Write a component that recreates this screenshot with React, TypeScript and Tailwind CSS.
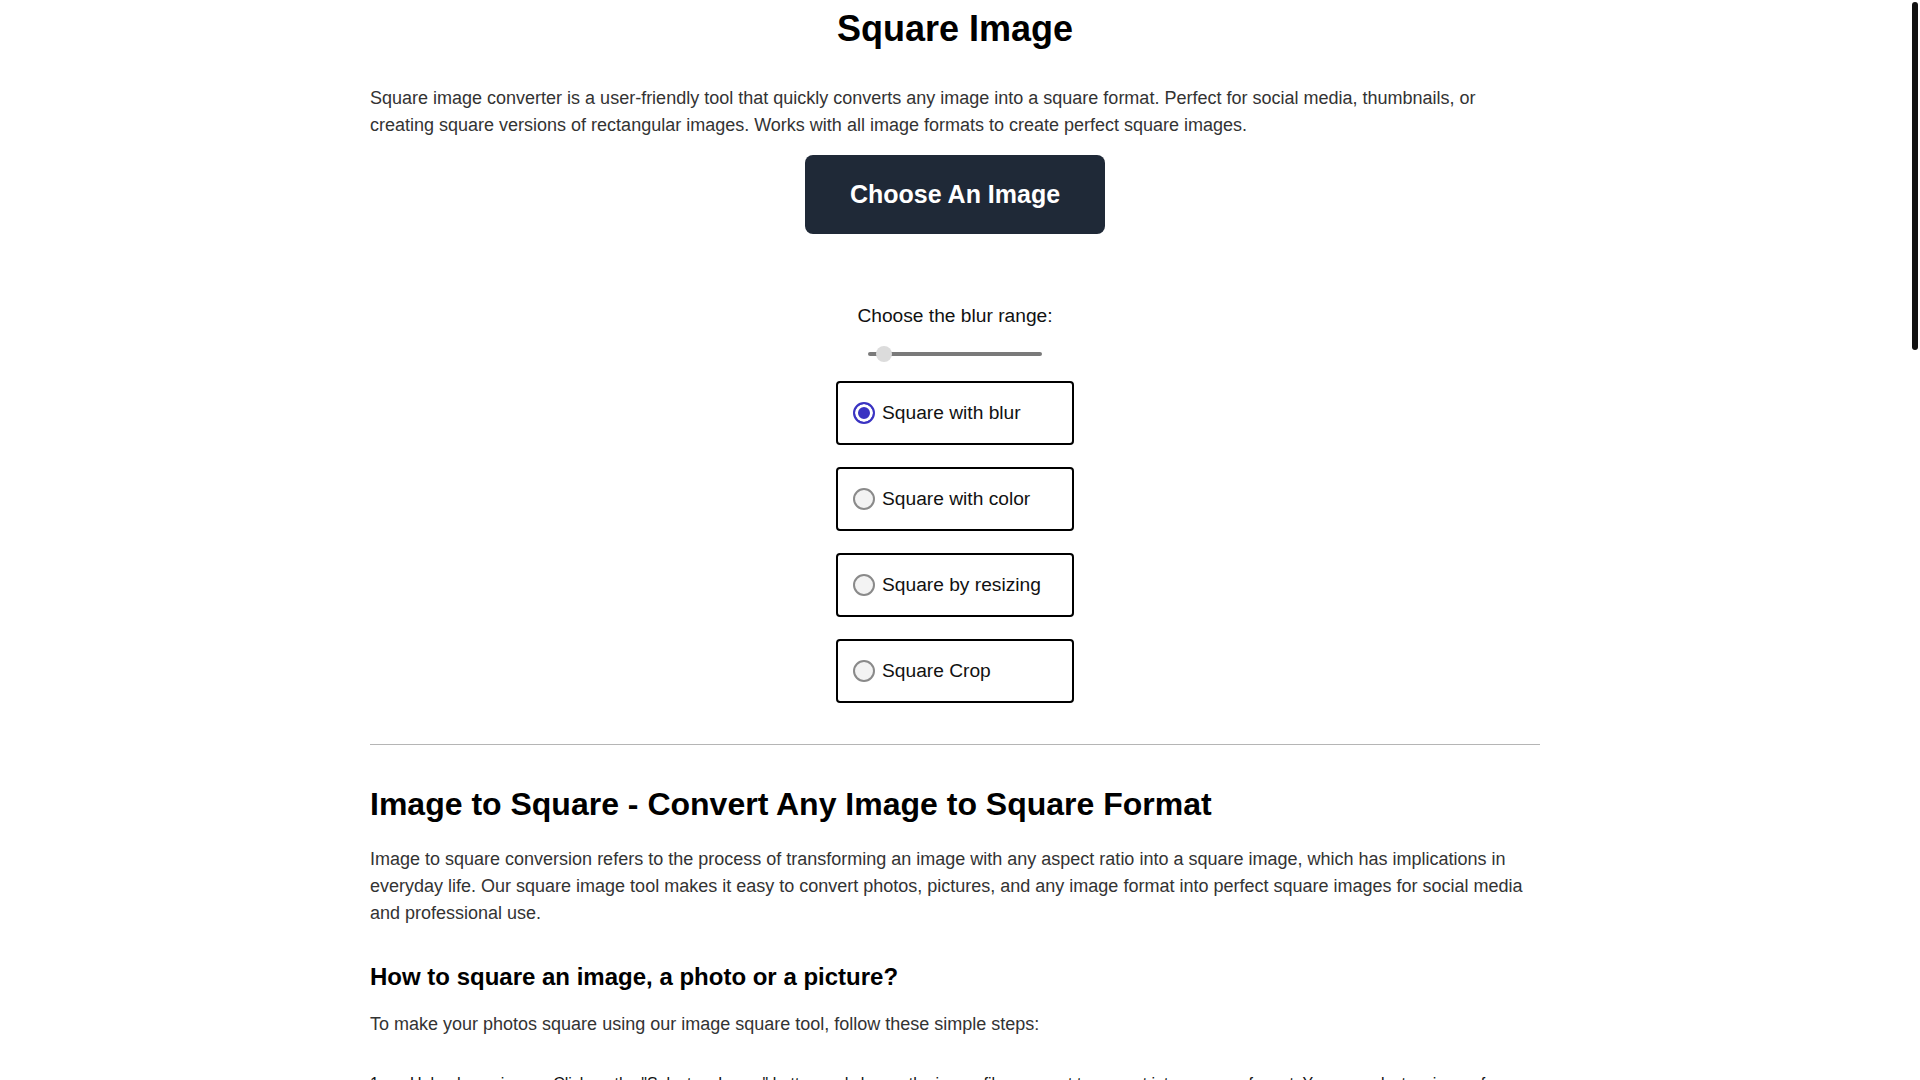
import { useState } from 'react'

const modes = [
  { id: 'blur', label: 'Square with blur' },
  { id: 'color', label: 'Square with color' },
  { id: 'resize', label: 'Square by resizing' },
  { id: 'crop', label: 'Square Crop' },
]

const steps = [
  {
    title: 'Upload your image:',
    text: 'Click on the "Select an Image" button and choose the image file you want to convert into a square format. You can select an image from your computer, phone or tablet, whatever the format (JPG, PNG, WEBP, GIF).',
  },
  {
    title: 'Choose the squaring mode:',
    text: 'Pick "Square with blur" to fill the empty space with a blurred copy of your picture, "Square with color" to use a solid background, "Square by resizing" to stretch the image, or "Square Crop" to cut it.',
  },
  {
    title: 'Adjust the settings:',
    text: 'Use the blur range slider to set how strong the background blur should be, or pick the background color that suits your photo best.',
  },
  {
    title: 'Download your square image:',
    text: 'Once you are happy with the preview, click the download button to save your new square image. Your files never leave your device.',
  },
]

const faqs = [
  {
    q: 'Why convert an image to a square?',
    a: 'Many platforms such as Instagram, Facebook, LinkedIn or online marketplaces display pictures in a square frame. Converting your image beforehand keeps the whole subject visible instead of letting the platform crop it automatically.',
  },
  {
    q: 'Will my image lose quality?',
    a: 'No. The square image is generated at the resolution of the longest side of your original picture, so no detail is lost during the conversion.',
  },
  {
    q: 'Which image formats are supported?',
    a: 'The square image tool works with all common formats including JPG, JPEG, PNG, WEBP, GIF and BMP. The result can be downloaded as a JPG or PNG file.',
  },
  {
    q: 'Is the square image converter free?',
    a: 'Yes, the tool is completely free, requires no sign up and adds no watermark to your pictures.',
  },
  {
    q: 'Are my images uploaded to a server?',
    a: 'No. All the processing happens directly in your browser, which keeps your photos private and makes the conversion instant.',
  },
]

export default function App() {
  const [mode, setMode] = useState('blur')
  const [blur, setBlur] = useState(1)

  return (
    <div className="h-screen overflow-y-auto bg-white pr-[10px] font-['Liberation_Sans',Arial,sans-serif]">
      <div className="fixed top-[2px] right-[2px] h-[348px] w-[6px] rounded-full bg-[#111]" />

      <main className="mx-auto max-w-[1200px] px-[15px] pb-16">
        <h1 className="pt-[9px] text-center text-4xl leading-10 font-bold text-black">Square Image</h1>

        <p className="mt-[36px] text-[18px] leading-[27px] text-[#333]">
          Square image converter is a user-friendly tool that quickly converts any image into a square format. Perfect for
          social media, thumbnails, or creating square versions of rectangular images. Works with all image formats to
          create perfect square images.
        </p>

        <div className="mt-4 flex justify-center">
          <button
            type="button"
            className="rounded-lg bg-[#1f2937] px-[45px] py-6 text-[25px] leading-[31px] font-bold text-white"
          >
            Choose An Image
          </button>
        </div>

        {/* ── Options ───────────────────────────────────────────── */}
        <div className="mt-[68px] flex flex-col items-center">
          <label htmlFor="blur" className="text-[19.2px] leading-[27px] text-[#111]">
            Choose the blur range:
          </label>
          <div className="mt-[17px] flex h-4 items-center">
            <input
              id="blur"
              type="range"
              min={0}
              max={20}
              value={blur}
              onChange={e => setBlur(Number(e.target.value))}
              className="h-1 w-[174px] cursor-pointer appearance-none rounded-full bg-[#7a7a7a] [&::-webkit-slider-thumb]:h-4 [&::-webkit-slider-thumb]:w-4 [&::-webkit-slider-thumb]:appearance-none [&::-webkit-slider-thumb]:rounded-full [&::-webkit-slider-thumb]:bg-[#dcdcdc]"
            />
          </div>

          <div className="mt-[19px] flex flex-col items-center gap-[22px]">
            {modes.map(m => (
              <label
                key={m.id}
                className="flex h-16 w-[238px] cursor-pointer items-center gap-[7px] rounded-[4px] border-2 border-black px-[15px] text-[19.2px] text-[#111]"
              >
                <input
                  type="radio"
                  name="mode"
                  checked={mode === m.id}
                  onChange={() => setMode(m.id)}
                  className="h-[22px] w-[22px] shrink-0 appearance-none rounded-full border-2 border-[#8a8a8a] bg-[#f3f3f3] checked:border-[#3a33c2] checked:bg-[#3a33c2] checked:shadow-[inset_0_0_0_3px_white]"
                />
                {m.label}
              </label>
            ))}
          </div>
        </div>

        <hr className="mt-[41px] border-t border-[#b5b5b5]" />

        {/* ── Article ───────────────────────────────────────────── */}
        <h2 className="mt-[41px] text-[32px] leading-9 font-bold text-black">
          Image to Square - Convert Any Image to Square Format
        </h2>
        <p className="mt-6 text-[18px] leading-[27px] text-[#333]">
          Image to square conversion refers to the process of transforming an image with any aspect ratio into a square
          image, which has implications in everyday life. Our square image tool makes it easy to convert photos, pictures,
          and any image format into perfect square images for social media and professional use.
        </p>

        <h3 className="mt-[34px] text-2xl leading-8 font-bold text-black">How to square an image, a photo or a picture?</h3>
        <p className="mt-[18px] text-[18px] leading-[27px] text-[#333]">
          To make your photos square using our image square tool, follow these simple steps:
        </p>

        <ol className="mt-[34px] flex flex-col gap-4 text-base leading-6 text-[#111]">
          {steps.map((s, i) => (
            <li key={s.title} className="flex">
              <span className="w-10 shrink-0">{i + 1}.</span>
              <span>
                {s.title} {s.text}
              </span>
            </li>
          ))}
        </ol>

        <h3 className="mt-10 text-2xl leading-8 font-bold text-black">Why use a square image tool?</h3>
        <p className="mt-[18px] text-[18px] leading-[27px] text-[#333]">
          Square pictures are the standard format for profile photos, product listings, album covers and social media
          posts. Instead of cropping important parts of your photo, the square image converter adds a blurred or colored
          background around it so the whole picture fits perfectly inside a square frame. This keeps your compositions
          balanced and your subjects fully visible, whatever the original aspect ratio was.
        </p>
        <p className="mt-4 text-[18px] leading-[27px] text-[#333]">
          Photographers, online sellers, designers and social media managers use square images every day to keep a
          consistent look across their feeds and catalogs. With this tool the whole process takes only a few seconds and
          works directly in your browser.
        </p>

        <h3 className="mt-10 text-2xl leading-8 font-bold text-black">Features of the square image converter</h3>
        <ul className="mt-[18px] flex list-disc flex-col gap-2 pl-10 text-[18px] leading-[27px] text-[#333]">
          <li>Square with blur: fill the background with a blurred version of your image.</li>
          <li>Square with color: choose any solid color for the background.</li>
          <li>Square by resizing: stretch the image to square dimensions.</li>
          <li>Square crop: keep only the central square part of your picture.</li>
          <li>Works with JPG, PNG, WEBP, GIF and more.</li>
          <li>Free, fast and private: nothing is uploaded to a server.</li>
        </ul>

        <h2 className="mt-12 text-[32px] leading-9 font-bold text-black">Frequently Asked Questions</h2>
        <div className="mt-5 flex flex-col gap-8">
          {faqs.map(f => (
            <div key={f.q}>
              <h3 className="text-2xl leading-8 font-bold text-black">{f.q}</h3>
              <p className="mt-3 text-[18px] leading-[27px] text-[#333]">{f.a}</p>
            </div>
          ))}
        </div>

        <h2 className="mt-12 text-[32px] leading-9 font-bold text-black">Tips for the best square images</h2>
        <p className="mt-5 text-[18px] leading-[27px] text-[#333]">
          For portraits, the blur mode usually gives the most natural result because the background keeps the colors of
          the original photo. For product pictures on a white background, the color mode with a white fill is often the
          best choice. When the subject is centered and there is enough space around it, a simple square crop can work
          perfectly as well.
        </p>
        <p className="mt-4 text-[18px] leading-[27px] text-[#333]">
          Try the different modes and settings and compare the previews before downloading your final square image.
        </p>

        <hr className="mt-12 border-t border-[#b5b5b5]" />
        <p className="mt-6 text-center text-sm text-[#666]">© Square Image — Convert any image to a square format.</p>
      </main>
    </div>
  )
}
